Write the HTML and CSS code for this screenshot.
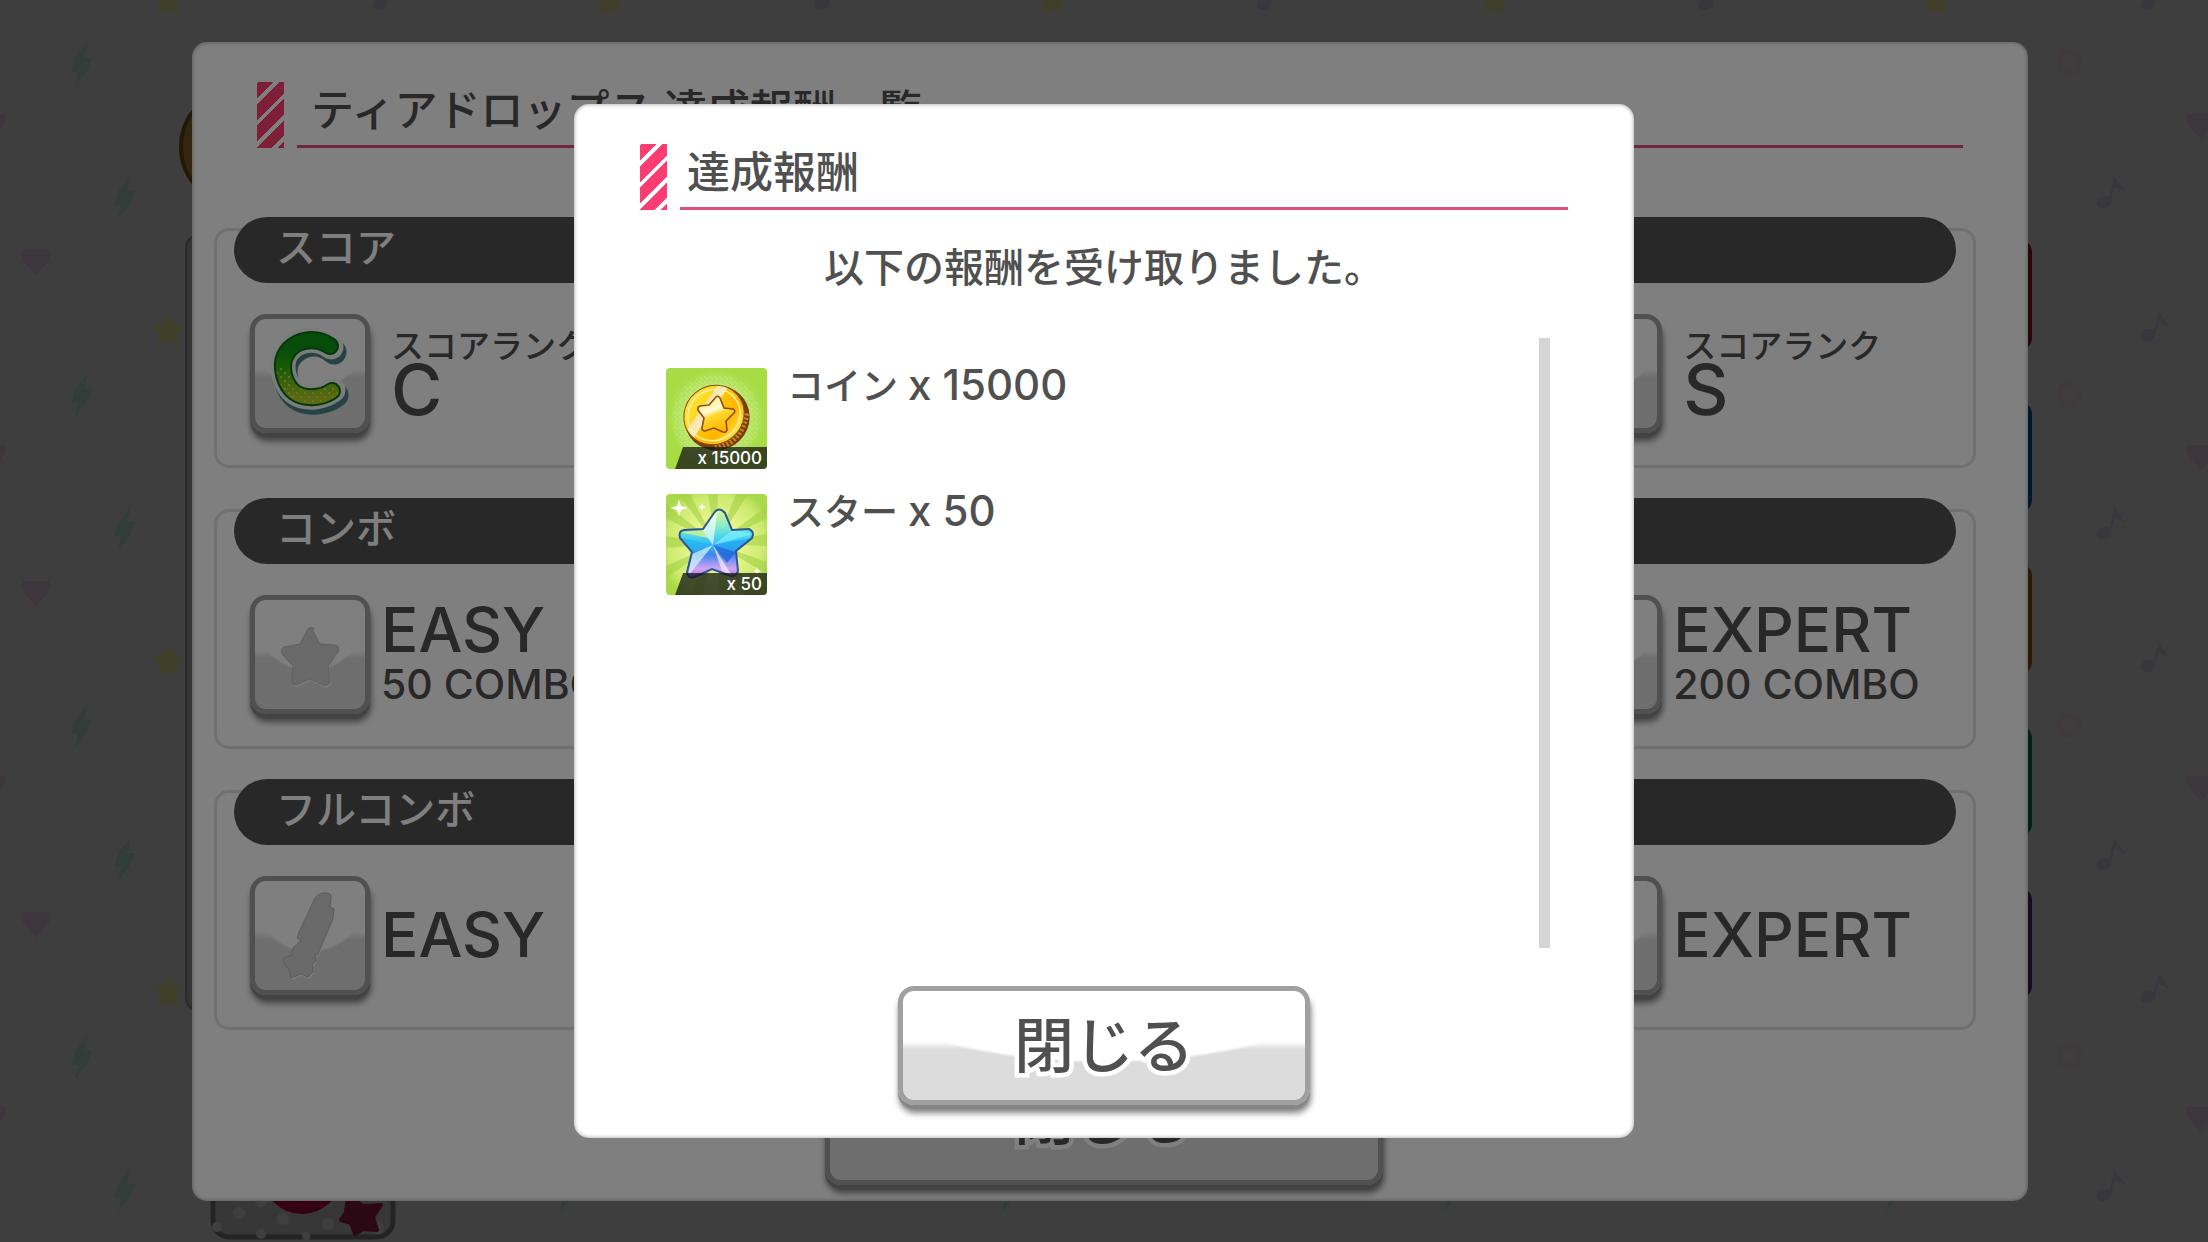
FILE: index.html
```html
<!DOCTYPE html>
<html lang="ja">
<head>
<meta charset="UTF-8" />
<title>達成報酬</title>
<meta name="viewport" content="width=device-width, initial-scale=1" />
<link rel="stylesheet" href="styles.css">
</head>
<body>
  <!-- BACKDROP -->
  <div class="backdrop">
    <svg class="confetti" width="100%" height="100%" aria-hidden="true">
      <defs>
        <pattern id="confetti" width="442" height="331" y="-18" patternUnits="userSpaceOnUse">
          <path d="M168 1l5 9 11 2-7 8 1 12-10-4-10 4 1-12-7-8 11-2z" fill="#ffffa8" />
          <path d="M168 332l5 9 11 2-7 8 1 12-10-4-10 4 1-12-7-8 11-2z" fill="#ffffa8" />
          <path d="M88 60l-13 16-4 14h7l-3 14 12-15 5-13h-8z" fill="#c8f2e6" />
          <path d="M131 193l-13 16-4 14h7l-3 14 12-15 5-13h-8z" fill="#c8f2e6" />
          <path d="M22 268h28q3 6-3 13l-11 13-11-13q-6-7-3-13z" fill="#fbd9f4" />
          <path d="M0 132h5q3 6-3 13l-2 3zM442 132h-23q-3 6 3 13l11 13 9-10z" fill="#fbd9f4" />
          <g fill="#e6def8">
            <ellipse cx="336" cy="220" rx="8" ry="6" transform="rotate(-20 336 220)" />
            <path d="M341 218l5-24 12 16-12-5-3 14z" />
            <ellipse cx="380" cy="22" rx="8" ry="6" transform="rotate(-20 380 22)" />
            <path d="M385 20l5-20 2 0 10 14-11-5-4 12z" />
          </g>
          <circle cx="301" cy="81" r="10" fill="none" stroke="#ffeceb" stroke-width="6" />
        </pattern>
      </defs>
      <rect width="100%" height="100%" fill="url(#confetti)" />
    </svg>
    <div class="medal"></div>
    <div class="board"></div>
    <div class="tabs">
      <span class="tab tab-red"></span>
      <span class="tab tab-blue"></span>
      <span class="tab tab-orange"></span>
      <span class="tab tab-green"></span>
      <span class="tab tab-purple"></span>
    </div>
    <svg class="thumb" viewBox="0 0 186 80" aria-hidden="true">
      <rect x="3" y="-40" width="180" height="117" rx="16" fill="#dcdcdc" stroke="#909090" stroke-width="5" />
      <g fill="#fff">
        <circle cx="29" cy="53" r="6" /><circle cx="73" cy="59" r="6" /><circle cx="118" cy="64" r="6" />
        <circle cx="7" cy="67" r="5" /><circle cx="51" cy="74" r="5" /><circle cx="96" cy="76" r="4" />
        <circle cx="168" cy="68" r="6" /><circle cx="51" cy="41" r="6" />
      </g>
      <circle cx="92" cy="14" r="40" fill="#d40a4c" />
      <path d="M138 36l15 10 18-1-8 12 4 13-14-1-8 5-4-11-10-3 5-8z" fill="#b01c50" stroke="#b01c50" stroke-width="4" stroke-linejoin="round" />
    </svg>
  </div>

  <!-- REWARD LIST -->
  <div class="overlay overlay-list">
    <main class="dialog">
      <header class="dialog-head">
        <span class="stripes"></span>
        <h1 class="dialog-title">ティアドロップス 達成報酬一覧</h1>
      </header>

      <section class="group">
        <h2 class="group-title">スコア</h2>
        <div class="goals">
          <div class="goal">
            <div class="tile">
              <svg viewBox="0 0 110 110" aria-hidden="true">
                <defs>
                  <linearGradient id="rankC" x1="0" y1="0" x2="0" y2="1">
                    <stop offset="0.15" stop-color="#0a9a12" />
                    <stop offset="0.5" stop-color="#37b80c" />
                    <stop offset="1" stop-color="#b4d422" />
                  </linearGradient>
                  <pattern id="rankDots" width="8" height="8" patternUnits="userSpaceOnUse">
                    <circle cx="2" cy="2" r="1" fill="#ddf06a" /><circle cx="6" cy="6" r="1" fill="#ddf06a" />
                  </pattern>
                </defs>
                <g fill="none" stroke-linecap="round">
                  <path d="M79 33Q64 20 46 28Q26 39 31 61Q37 85 62 83Q73 82 81 76" stroke="#4c8484" stroke-width="25" />
                  <path d="M76 28Q61 17 43 24Q24 34 29 56Q35 80 60 78Q70 77 78 71" stroke="#f4fbf4" stroke-width="25" />
                  <path d="M75 27Q60 17 43 24Q24 34 29 56Q35 80 60 78Q70 77 77 72" stroke="#0a6e1c" stroke-width="18" />
                  <path d="M75 27Q60 17 43 24Q24 34 29 56Q35 80 60 78Q70 77 77 72" stroke="url(#rankC)" stroke-width="14" />
                  <path d="M28 53Q34 80 60 78Q70 77 77 72" stroke="url(#rankDots)" stroke-width="12" />
                </g>
              </svg>
            </div>
            <p class="goal-text goal-rank"><span class="label">スコアランク</span><span class="rank">C</span></p>
          </div>
          <div class="goal goal-last">
            <div class="tile"></div>
            <p class="goal-text goal-rank"><span class="label">スコアランク</span><span class="rank">S</span></p>
          </div>
        </div>
      </section>

      <section class="group">
        <h2 class="group-title">コンボ</h2>
        <div class="goals">
          <div class="goal">
            <div class="tile">
              <svg viewBox="0 0 110 110" aria-hidden="true">
                <path d="M57 29l8 15 16 1q5 3 1 8L73 66l2 16q-2 5-7 3l-13-6-14 6q-4 0-4-4l1-15-11-12q-2-5 2-7l16-3 7-14q4-5 7-1z" transform="translate(1 2)" fill="#f6f6f6" />
                <path d="M57 29l8 15 16 1q5 3 1 8L73 66l2 16q-2 5-7 3l-13-6-14 6q-4 0-4-4l1-15-11-12q-2-5 2-7l16-3 7-14q4-5 7-1z" fill="#d3d3d3" stroke="#c2c2c2" />
              </svg>
            </div>
            <p class="goal-text"><span class="level">EASY</span><span class="count">50 COMBO</span></p>
          </div>
          <div class="goal goal-last">
            <div class="tile"></div>
            <p class="goal-text"><span class="level">EXPERT</span><span class="count">200 COMBO</span></p>
          </div>
        </div>
      </section>

      <section class="group">
        <h2 class="group-title">フルコンボ</h2>
        <div class="goals">
          <div class="goal">
            <div class="tile">
              <svg viewBox="0 0 110 110" aria-hidden="true">
                <path d="M71 12q5 0 5 4l-1 10 4 2-1 9-15 36-3 2 1 5-4 4 1 7-5 5-7-3-10 4-2-8-6-8 1-4 8-3 1-7 8-8-4-2 2-6 16-34q5-6 11-5z" transform="translate(1 2)" fill="#f6f6f6" />
                <path d="M71 12q5 0 5 4l-1 10 4 2-1 9-15 36-3 2 1 5-4 4 1 7-5 5-7-3-10 4-2-8-6-8 1-4 8-3 1-7 8-8-4-2 2-6 16-34q5-6 11-5z" fill="#d3d3d3" stroke="#b8b8b8" />
              </svg>
            </div>
            <p class="goal-text"><span class="level">EASY</span></p>
          </div>
          <div class="goal goal-last">
            <div class="tile"></div>
            <p class="goal-text"><span class="level">EXPERT</span></p>
          </div>
        </div>
      </section>

      <button class="btn btn-wide" type="button">閉じる</button>
    </main>
  </div>

  <!-- RECEIVED REWARDS -->
  <div class="overlay overlay-received">
    <div class="dialog received" role="dialog" aria-labelledby="receivedTitle">
      <header class="dialog-head">
        <span class="stripes"></span>
        <h2 class="dialog-title" id="receivedTitle">達成報酬</h2>
      </header>
      <p class="message">以下の報酬を受け取りました。</p>

      <div class="reward-area">
        <ul class="rewards">
          <li class="reward">
            <div class="thumbnail">
              <svg viewBox="0 0 101 101" aria-hidden="true">
                <defs>
                  <radialGradient id="coinBg"><stop offset="0.4" stop-color="#c9ee8c" /><stop offset="1" stop-color="#a8dc44" /></radialGradient>
                  <linearGradient id="coinFace" x1="0.3" y1="0" x2="0.6" y2="1">
                    <stop offset="0" stop-color="#ffe23c" /><stop offset="0.28" stop-color="#ffd91f" />
                    <stop offset="0.3" stop-color="#fbe6b0" /><stop offset="0.44" stop-color="#fce9bd" />
                    <stop offset="0.46" stop-color="#ffc400" /><stop offset="0.75" stop-color="#ffb400" /><stop offset="1" stop-color="#ffe640" />
                  </linearGradient>
                  <linearGradient id="coinStar" x1="0.2" y1="0" x2="0.6" y2="1">
                    <stop offset="0.1" stop-color="#fff27a" /><stop offset="0.4" stop-color="#fffbd8" />
                    <stop offset="0.55" stop-color="#ffd82a" /><stop offset="1" stop-color="#ffb000" />
                  </linearGradient>
                  <pattern id="halftone" width="5" height="5" patternUnits="userSpaceOnUse">
                    <circle cx="1" cy="1" r="0.7" fill="#cdf095" /><circle cx="4" cy="4" r="0.7" fill="#cdf095" />
                  </pattern>
                </defs>
                <rect width="101" height="101" fill="#a8dc44" />
                <circle cx="50" cy="50" r="49" fill="url(#coinBg)" />
                <circle cx="50" cy="50" r="44" fill="url(#halftone)" />
                <ellipse cx="51" cy="50" rx="33" ry="32" fill="#7a3e0c" transform="rotate(-35 51 50)" />
                <path d="M49 80Q75 75 81 44" fill="none" stroke="#c98425" stroke-width="6" stroke-dasharray="2 2" />
                <ellipse cx="48" cy="47" rx="31" ry="29" fill="url(#coinFace)" stroke="#8a4a08" transform="rotate(-40 48 47)" />
                <ellipse cx="48" cy="47" rx="27" ry="25" fill="none" stroke="#fff2a8" stroke-width="1.5" transform="rotate(-40 48 47)" />
                <path d="M50 29q2-2 4 1l4 10 9 1q3 2 1 4l-8 8 1 9q-1 3-4 2l-9-4-9 3q-3 0-3-3l2-10-6-8q-1-3 2-4l9-1z" fill="url(#coinStar)" stroke="#8a4f1c" stroke-width="1.6" />
              </svg>
              <span class="amount">x 15000</span>
            </div>
            <p class="reward-name">コイン <span class="reward-count">x 15000</span></p>
          </li>
          <li class="reward">
            <div class="thumbnail">
              <svg viewBox="0 0 101 101" aria-hidden="true">
                <defs>
                  <radialGradient id="starBg"><stop offset="0.2" stop-color="#f4fc9c" /><stop offset="0.8" stop-color="#cdea70" /><stop offset="1" stop-color="#a9d948" /></radialGradient>
                  <linearGradient id="gem" x1="0" y1="0" x2="0" y2="1">
                    <stop offset="0.14" stop-color="#eaf58e" /><stop offset="0.32" stop-color="#86ecc8" />
                    <stop offset="0.45" stop-color="#3ccdf6" /><stop offset="0.6" stop-color="#3d86ec" />
                    <stop offset="0.74" stop-color="#d3a4f4" /><stop offset="0.86" stop-color="#8a62de" />
                  </linearGradient>
                  <clipPath id="gemClip"><path d="M48 19q5-7 11 0l7 17 17-1q6 3 3 9L70 57l2 20q-3 8-10 4L46 75 29 83q-8 2-8-5l5-20L14 44q-2-7 4-8l19-1z" /></clipPath>
                </defs>
                <rect width="101" height="101" fill="#a9d948" />
                <circle cx="50" cy="50" r="60" fill="url(#starBg)" />
                <path d="M50 50L0 10v14zM50 50L12 0h12zM50 50L42 0h10zM50 50L70 0h12zM50 50L101 12v12zM50 50l51-10v12zM50 50l51 18v12zM50 50L0 42v12zM50 50L0 72v12zM50 50L24 101h12zM50 50l4 51h12zM50 50l30 51h12z" fill="#9ed03f" opacity="0.55" />
                <path d="M13 6l2 6 7 2-7 2-2 6-2-6-7-2 7-2zM36 9l1 3 3 1-3 1-1 3-1-3-3-1 3-1zM91 73l1 3 3 1-3 1-1 3-1-3-3-1 3-1z" fill="#fff" />
                <g clip-path="url(#gemClip)">
                  <rect width="101" height="101" fill="url(#gem)" />
                  <path d="M47 51L52 12 36 36z" fill="#fff" opacity="0.65" />
                  <path d="M47 51l40-11-20-4z" fill="#7ff0ff" opacity="0.7" />
                  <path d="M47 51L86 44 70 58z" fill="#1fa4ee" opacity="0.7" />
                  <path d="M47 51L12 43l14 15z" fill="#23b4ee" opacity="0.7" />
                  <path d="M13 38l25-2 4 8z" fill="#e6f47e" opacity="0.7" />
                  <path d="M47 51L22 82l4-22z" fill="#d6fbff" opacity="0.7" />
                  <path d="M47 51l14 18 9-11z" fill="#1b62d8" opacity="0.7" />
                  <path d="M47 51l19 31-10-5z" fill="#f4ecff" opacity="0.75" />
                </g>
                <path d="M48 19q5-7 11 0l7 17 17-1q6 3 3 9L70 57l2 20q-3 8-10 4L46 75 29 83q-8 2-8-5l5-20L14 44q-2-7 4-8l19-1z" fill="none" stroke="#2c5596" stroke-width="2" />
              </svg>
              <span class="amount">x 50</span>
            </div>
            <p class="reward-name">スター <span class="reward-count">x 50</span></p>
          </li>
        </ul>
        <div class="scrollbar"></div>
      </div>

      <button class="btn" type="button">閉じる</button>
    </div>
  </div>
</body>
</html>
```

FILE: styles.css
```css
:root {
  --ink: #505050;
  --pink: #ff3d72;
  --line: #e0507a;
  --edge: #a0a0a0;
  --font: Inter, "Noto Sans CJK JP", sans-serif;
}

* {
  box-sizing: border-box;
}

html,
body {
  margin: 0;
  height: 100%;
  overflow: hidden;
  background: #fffafb;
  color: var(--ink);
  font-family: var(--font);
}

h1,
h2,
p,
ul {
  margin: 0;
  padding: 0;
  font-weight: 500;
}

/* ------------ BACKDROP ------------- */
.backdrop {
  position: fixed;
  inset: 0;
  overflow: hidden;
}
.confetti {
  display: block;
}
.medal {
  position: absolute;
  left: 179px;
  top: 87px;
  width: 120px;
  height: 120px;
  border: 4px solid #8a6414;
  border-radius: 50%;
  background: #c99a44;
}
.board {
  position: absolute;
  left: 185px;
  right: 200px;
  top: 234px;
  height: 778px;
  border: 2px solid #a8a8a8;
  border-radius: 14px;
  background: #d4d2d3;
}
.tabs {
  position: absolute;
  right: 176px;
  top: 240px;
  display: flex;
  flex-direction: column;
  gap: 52px;
}
.tab {
  width: 60px;
  height: 110px;
  border-radius: 12px;
}
.tab-red { background: #a4182c; }
.tab-blue { background: #0d62ac; }
.tab-orange { background: #b4651c; }
.tab-green { background: #128058; }
.tab-purple { background: #6a2496; }
.thumb {
  position: absolute;
  left: 210px;
  bottom: 2px;
  width: 186px;
  height: 80px;
}

/* ------------ DIALOGS ------------- */
.overlay {
  position: fixed;
  inset: 0;
  display: flex;
  justify-content: center;
  align-items: center;
  background: rgba(0, 0, 0, 0.5);
}
.overlay-list {
  padding: 0 180px 0 192px;
}
.dialog {
  display: flex;
  flex-direction: column;
  width: 100%;
  padding: 40px 52px 16px 22px;
  border-radius: 15px;
  background: #fff;
  box-shadow: inset 0 0 4px rgba(0, 0, 0, 0.4);
}
.dialog-head {
  display: flex;
  gap: 13px;
  margin: 0 13px 0 43px;
}
.stripes {
  width: 27px;
  height: 66px;
  background: repeating-linear-gradient(135deg, #fff 0 1px, var(--pink) 1px 12px, #fff 12px 15px);
}
.dialog-title {
  flex: 1;
  padding-left: 14px;
  border-bottom: 3px solid var(--line);
  font-size: 43px;
  line-height: 56px;
}

/* ------------ GOAL GROUPS ------------- */
.group {
  margin-top: 41px;
  border: 3px solid #e0e0e0;
  border-radius: 15px;
}
.dialog-head + .group {
  margin-top: 80px;
}
.group-title {
  margin: -14px 17px 0;
  padding: 0 0 4px 42px;
  border-radius: 33px;
  background: var(--ink);
  color: #fff;
  font-size: 40px;
  line-height: 62px;
}
.goals {
  display: grid;
  grid-template-columns: repeat(4, 1fr);
  padding: 31px 0 32px 33px;
}
.goal {
  display: flex;
  align-items: center;
  gap: 11px;
}
.goal-last {
  grid-column: 4;
}
.tile,
.btn {
  border: 5px solid var(--edge);
  border-radius: 16px;
  background:
    radial-gradient(ellipse 58% 66% at 50% 0, #fff 96%, transparent),
    linear-gradient(#fff 46%, #dcdcdc 54%);
  box-shadow: 0 4px 1px #868686, 1px 8px 6px rgba(0, 0, 0, 0.5);
}
.tile {
  width: 120px;
  height: 119px;
}
.tile svg {
  display: block;
}
.goal-text {
  display: flex;
  flex-direction: column;
  white-space: nowrap;
}
.goal-rank {
  padding-left: 10px;
}
.label {
  font-size: 33px;
  line-height: 34px;
}
.rank {
  font-size: 70px;
  line-height: 54px;
}
.level {
  font-size: 62px;
  line-height: 60px;
}
.count {
  font-size: 41px;
  line-height: 48px;
}

.btn {
  align-self: center;
  width: 412px;
  height: 119px;
  padding: 0;
  color: var(--ink);
  font-family: var(--font);
  font-size: 60px;
  font-weight: 500;
  line-height: 90px;
  -webkit-text-stroke: 9px #fff;
  paint-order: stroke fill;
  cursor: pointer;
}
.btn-wide {
  width: 558px;
  height: 133px;
  margin: 22px 0 0 18px;
}

/* ------------ RECEIVED ------------- */
.received {
  width: 48%;
  padding: 40px 66px 33px;
}
.received .dialog-head {
  margin: 0;
}
.received .dialog-title {
  padding-left: 7px;
}
.message {
  margin: 28px 0 40px;
  font-size: 40px;
  line-height: 60px;
  text-align: center;
}
.reward-area {
  display: flex;
  justify-content: space-between;
  height: 610px;
  margin: 0 18px 38px 26px;
}
.rewards {
  display: flex;
  flex-direction: column;
  gap: 25px;
  padding-top: 30px;
  list-style: none;
}
.reward {
  display: flex;
  gap: 20px;
}
.thumbnail {
  position: relative;
  width: 101px;
  height: 101px;
  overflow: hidden;
  border-radius: 4px;
}
.thumbnail svg {
  display: block;
}
.amount {
  position: absolute;
  right: 0;
  bottom: 0;
  width: 92px;
  padding-right: 5px;
  background: rgba(20, 20, 20, 0.75);
  clip-path: polygon(8px 0, 100% 0, 100% 100%, 0 100%);
  color: #fff;
  font-size: 17px;
  line-height: 22px;
  text-align: right;
}
.reward-name {
  font-size: 37px;
  line-height: 33px;
}
.reward-count {
  font-size: 42px;
}
.scrollbar {
  width: 11px;
  background: #d5d5d5;
}
```
